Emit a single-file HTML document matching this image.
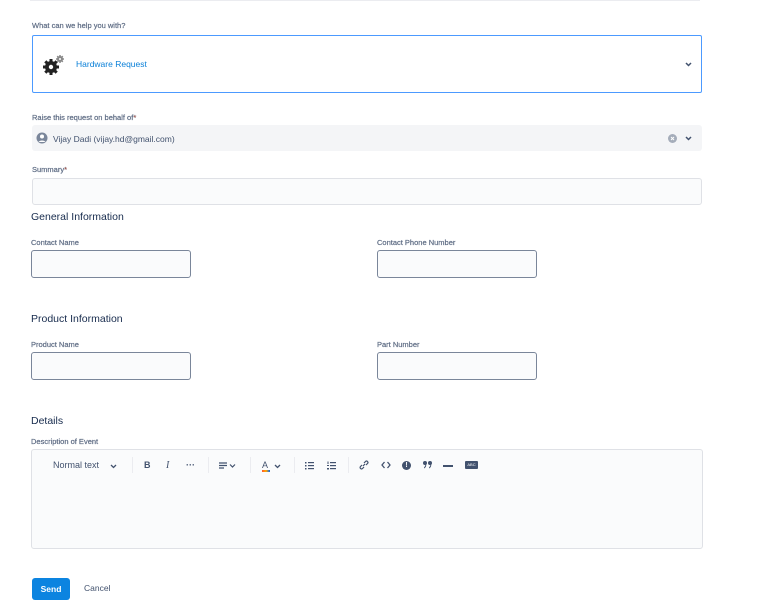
<!DOCTYPE html>
<html><head><style>
*{margin:0;padding:0;box-sizing:border-box}
body{width:772px;height:605px;background:#fff;font-family:"Liberation Sans",sans-serif;position:relative;overflow:hidden;color:#172b4d}
.a{position:absolute}
.lbl{font-size:7.5px;color:#5e6c84;font-weight:normal;-webkit-text-stroke:0.2px #5e6c84}
.req{color:#de350b}
.h{font-size:10.5px;color:#172b4d}
.in{background:#fafbfc;border:1px solid #7a869a;border-radius:3px}
.tb{position:absolute;top:460px;font-size:9px;color:#42526e}
.sep{position:absolute;top:457px;width:1px;height:16px;background:#ebecf0}
</style></head><body>
<div class="a" style="left:30px;top:0;width:670px;height:1px;background:#ebecf0"></div>
<div class="a lbl" style="left:32px;top:21px">What can we help you with?</div>
<div class="a" style="left:32px;top:35px;width:670px;height:58px;border:1px solid #4c9aff;border-radius:2px"></div>
<svg class="a" style="left:42px;top:54px" width="24" height="22" viewBox="0 0 24 22">
<g fill="#222"><circle cx="9" cy="13" r="6"/><g stroke="#222" stroke-width="3"><line x1="9" y1="5" x2="9" y2="21"/><line x1="1" y1="13" x2="17" y2="13"/><line x1="3.3" y1="7.3" x2="14.7" y2="18.7"/><line x1="3.3" y1="18.7" x2="14.7" y2="7.3"/></g><circle cx="9" cy="13" r="2.2" fill="#fff"/></g>
<g fill="#888"><circle cx="18" cy="5" r="3"/><g stroke="#888" stroke-width="1.5"><line x1="18" y1="1" x2="18" y2="9"/><line x1="14" y1="5" x2="22" y2="5"/><line x1="15.2" y1="2.2" x2="20.8" y2="7.8"/><line x1="15.2" y1="7.8" x2="20.8" y2="2.2"/></g><circle cx="18" cy="5" r="1" fill="#fff"/></g>
</svg>
<div class="a" style="left:76px;top:59px;font-size:8.5px;color:#0b80d8">Hardware Request</div>
<svg class="a" style="left:685px;top:62px" width="7" height="5"><path d="M1 1l2.5 2.5L6 1" stroke="#42526e" stroke-width="1.5" fill="none"/></svg>
<div class="a lbl" style="left:32px;top:113px">Raise this request on behalf of<span class="req">*</span></div>
<div class="a" style="left:32px;top:125px;width:670px;height:26px;background:#f4f5f7;border-radius:3px"></div>
<svg class="a" style="left:36px;top:132px" width="12" height="12" viewBox="0 0 12 12"><circle cx="6" cy="6" r="5.5" fill="#7a869a"/><circle cx="6" cy="4.5" r="2" fill="#fff"/><path d="M2.5 10a4 3 0 0 1 7 0" fill="#fff"/></svg>
<div class="a" style="left:53px;top:134px;font-size:8.5px;color:#42526e">Vijay Dadi (vijay.hd@gmail.com)</div>
<svg class="a" style="left:668px;top:134px" width="9" height="9"><circle cx="4.5" cy="4.5" r="4.5" fill="#a5adba"/><path d="M3 3l3 3M6 3l-3 3" stroke="#fff" stroke-width="1"/></svg>
<svg class="a" style="left:685px;top:136px" width="7" height="5"><path d="M1 1l2.5 2.5L6 1" stroke="#42526e" stroke-width="1.5" fill="none"/></svg>
<div class="a lbl" style="left:32px;top:165px">Summary<span class="req">*</span></div>
<div class="a" style="left:32px;top:178px;width:670px;height:27px;background:#fafbfc;border:1px solid #dfe1e6;border-radius:3px"></div>
<div class="a h" style="left:31px;top:211px">General Information</div>
<div class="a lbl" style="left:31px;top:238px">Contact Name</div>
<div class="a in" style="left:31px;top:250px;width:160px;height:28px"></div>
<div class="a lbl" style="left:377px;top:238px">Contact Phone Number</div>
<div class="a in" style="left:377px;top:250px;width:160px;height:28px"></div>
<div class="a h" style="left:31px;top:313px">Product Information</div>
<div class="a lbl" style="left:31px;top:340px">Product Name</div>
<div class="a in" style="left:31px;top:352px;width:160px;height:28px"></div>
<div class="a lbl" style="left:377px;top:340px">Part Number</div>
<div class="a in" style="left:377px;top:352px;width:160px;height:28px"></div>
<div class="a h" style="left:31px;top:415px">Details</div>
<div class="a lbl" style="left:31px;top:437px">Description of Event</div>
<div class="a" style="left:31px;top:449px;width:672px;height:100px;background:#fafbfc;border:1px solid #dfe1e6;border-radius:3px"></div>
<div class="tb" style="left:53px">Normal text</div>
<svg class="a" style="left:110px;top:464px" width="7" height="5"><path d="M1 1l2.5 2.5L6 1" stroke="#42526e" stroke-width="1.3" fill="none"/></svg>
<div class="sep" style="left:132px"></div>
<div class="tb" style="left:144px;font-weight:bold">B</div>
<div class="tb" style="left:166px;font-style:italic;font-family:'Liberation Serif',serif;font-size:10px">I</div>
<div class="tb" style="left:186px;font-weight:bold">···</div>
<div class="sep" style="left:208px"></div>
<svg class="a" style="left:219px;top:462px" width="18" height="8"><path d="M0 1h8M0 3.5h8M0 6h5" stroke="#42526e" stroke-width="1.2"/><path d="M11 2.5l2.5 2.5L16 2.5" stroke="#42526e" stroke-width="1.2" fill="none"/></svg>
<div class="sep" style="left:250px"></div>
<div class="tb" style="left:262px">A</div>
<div class="a" style="left:262px;top:470px;width:8px;height:2px;background:linear-gradient(90deg,#ff5630,#ffab00,#0065ff)"></div>
<svg class="a" style="left:274px;top:464px" width="7" height="5"><path d="M1 1l2.5 2.5L6 1" stroke="#42526e" stroke-width="1.3" fill="none"/></svg>
<div class="sep" style="left:294px"></div>
<svg class="a" style="left:305px;top:461px" width="10" height="9"><g fill="#42526e"><rect x="0" y="1" width="1.5" height="1.5"/><rect x="0" y="4" width="1.5" height="1.5"/><rect x="0" y="7" width="1.5" height="1.5"/><rect x="3" y="1" width="6" height="1.2"/><rect x="3" y="4" width="6" height="1.2"/><rect x="3" y="7" width="6" height="1.2"/></g></svg>
<svg class="a" style="left:327px;top:461px" width="10" height="9"><g fill="#42526e"><rect x="0.5" y="0.5" width="1" height="2.5"/><rect x="0" y="4" width="2" height="1"/><rect x="0" y="7" width="2" height="1.5"/><rect x="3" y="1" width="6" height="1.2"/><rect x="3" y="4" width="6" height="1.2"/><rect x="3" y="7" width="6" height="1.2"/></g></svg>
<div class="sep" style="left:348px"></div>
<svg class="a" style="left:359px;top:460px" width="10" height="10"><path d="M4 6l2-2M3 5L1.5 6.5a1.4 1.4 0 0 0 2 2L5 7M5 3l1.5-1.5a1.4 1.4 0 0 1 2 2L7 5" stroke="#42526e" stroke-width="1.2" fill="none"/></svg>
<svg class="a" style="left:381px;top:461px" width="10" height="8"><path d="M3.5 1L1 4l2.5 3M6.5 1L9 4 6.5 7" stroke="#42526e" stroke-width="1.3" fill="none"/></svg>
<div class="a" style="left:402px;top:461px;width:9px;height:9px;border-radius:50%;background:#42526e;color:#fff;font-size:7px;text-align:center;line-height:9px;font-weight:bold">!</div>
<svg class="a" style="left:423px;top:461px" width="10" height="8"><g fill="#42526e"><circle cx="2" cy="2" r="2"/><circle cx="7" cy="2" r="2"/><path d="M3 2.5Q4 6 1 7.5L1 6.5Q2.5 5 2.5 3z"/><path d="M8 2.5Q9 6 6 7.5L6 6.5Q7.5 5 7.5 3z"/></g></svg>
<div class="a" style="left:443px;top:465px;width:10px;height:1.5px;background:#42526e"></div>
<div class="a" style="left:465px;top:461px;width:13px;height:8px;background:#42526e;border-radius:1px;color:#fff;font-size:4px;text-align:center;line-height:8px">ABC</div>
<div class="a" style="left:32px;top:578px;width:38px;height:22px;background:#0c84e0;border-radius:3px;color:#fff;font-size:8.5px;font-weight:bold;text-align:center;line-height:22px">Send</div>
<div class="a" style="left:84px;top:583px;font-size:8.5px;color:#42526e">Cancel</div>
</body></html>
